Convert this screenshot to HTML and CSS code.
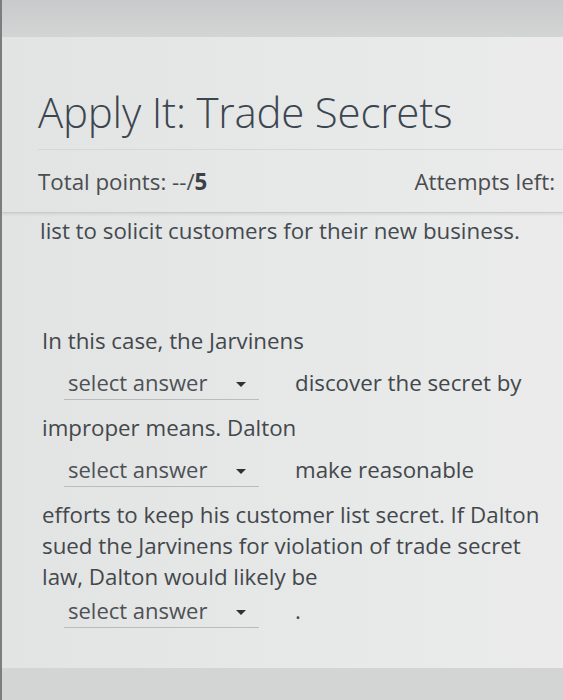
FILE: index.html
```html
<!DOCTYPE html>
<html>
<head>
<meta charset="utf-8">
<link rel="stylesheet" href="styles.css">
</head>
<body>
<div class="screen">
  <div class="topbar"></div>
  <div class="card">
    <header class="head">
      <h1 class="title">Apply It: Trade Secrets</h1>
      <div class="meta">
        <span class="points">Total points: --/<b>5</b></span>
        <span class="attempts">Attempts left:</span>
      </div>
    </header>
    <div class="content">
      <p class="lead">list to solicit customers for their new business.</p>
      <p class="question">
        In this case, the Jarvinens
        <span class="dd"><span class="dd-label">select answer</span><span class="caret"></span></span>discover the secret by
        improper means. Dalton
        <span class="dd"><span class="dd-label">select answer</span><span class="caret"></span></span>make reasonable
        efforts to keep his customer list secret. If Dalton sued the Jarvinens for violation of trade secret law, Dalton would likely be
        <span class="dd dd-last"><span class="dd-label">select answer</span><span class="caret"></span></span>.
      </p>
    </div>
  </div>
  <div class="bottombar"></div>
</div>
</body>
</html>
```

FILE: styles.css
```css
html, body {
  margin: 0;
  padding: 0;
}
body {
  width: 563px;
  height: 700px;
  overflow: hidden;
  font-family: "Open Sans", "Liberation Sans", sans-serif;
  background: #d2d3d3;
}
.screen {
  display: flex;
  flex-direction: column;
  height: 700px;
  border-left: 2px solid #7c7d7e;
  box-sizing: border-box;
}
.topbar {
  height: 37px;
  background: linear-gradient(#c9cacb, #d3d4d4);
  flex: none;
}
.card {
  flex: none;
  height: 631px;
  background: linear-gradient(90deg, #e2e3e3, #e8e9e9 70%, #ebebeb);
}
.head {
  height: 176px;
  border-bottom: 1px solid #c9caca;
  box-shadow: 0 2px 2px rgba(0,0,0,0.06);
  padding: 0 0 0 36px;
  box-sizing: border-box;
}
.title {
  margin: 0;
  padding-top: 47px;
  height: 113px;
  box-sizing: border-box;
  font-weight: 300;
  font-size: 42px;
  line-height: 56px;
  color: #3b4650;
  letter-spacing: -0.2px;
  border-bottom: 1px solid #d6d7d7;
}
.meta {
  display: flex;
  justify-content: space-between;
  padding-top: 18px;
  font-size: 22.3px;
  line-height: 28px;
  color: #4a4d50;
}
.points b {
  font-weight: 700;
  color: #3d4044;
}
.attempts {
  margin-right: 8px;
}
.content {
  padding: 3px 20px 0 38px;
}
.lead {
  margin: 0;
  font-size: 22.3px;
  line-height: 30px;
  color: #444a4f;
}
.question {
  margin: 79px 0 0 2px;
  width: 500px;
  font-size: 22.3px;
  line-height: 31px;
  color: #43484c;
}
.dd {
  display: inline-flex;
  align-items: center;
  justify-content: space-between;
  width: 195px;
  box-sizing: border-box;
  margin: 11px 36px 12px 22px;
  padding: 0 13px 2px 4px;
  border-bottom: 1px solid #b9bbbc;
  font-size: 22px;
  line-height: 30px;
  color: #4d5155;
  vertical-align: baseline;
}
.dd-last {
  margin-top: 3px;
}
.caret {
  width: 0;
  height: 0;
  border-left: 5px solid transparent;
  border-right: 5px solid transparent;
  border-top: 5px solid #2e3236;
  margin-top: 4px;
}
.bottombar {
  flex: 1;
  background: #d3d4d4;
}
```
